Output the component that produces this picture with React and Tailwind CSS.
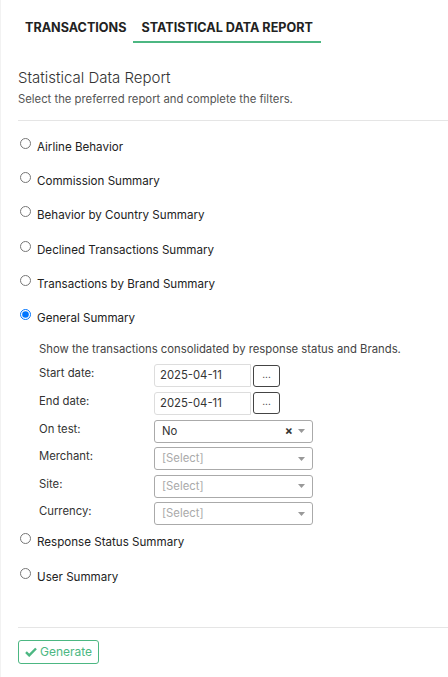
import { useState } from "react"

const reportes = [
  "Airline Behavior",
  "Commission Summary",
  "Behavior by Country Summary",
  "Declined Transactions Summary",
  "Transactions by Brand Summary",
  "General Summary",
  "Response Status Summary",
  "User Summary",
]

const Flecha = () => (
  <svg width="7" height="4" viewBox="0 0 7 4" className="ml-1">
    <path d="M0 0h7L3.5 4z" fill="#999" />
  </svg>
)

const Selector = ({ valor, limpiable }) => (
  <div className="w-[159px] h-[23px] border border-[#aaa] rounded-[3px] flex items-center px-[7px] bg-white">
    <span className={valor ? "flex-1 text-[#333]" : "flex-1 text-[#aaa]"}>
      {valor || "[Select]"}
    </span>
    {limpiable && <span className="text-[12px] font-bold text-[#333] leading-none mr-[1px]">×</span>}
    <Flecha />
  </div>
)

const CampoFecha = ({ valor }) => (
  <div className="flex items-center gap-[2px]">
    <div className="w-[97px] h-[23px] border border-[#ddd] rounded-l-[3px] flex items-center px-[5px] text-[#333]">
      {valor}
    </div>
    <button className="w-[27px] h-[22px] border border-[#444] rounded-[3px] text-[10px] leading-none text-[#333] pb-[4px]">
      ...
    </button>
  </div>
)

const Fila = ({ label, children }) => (
  <div className="flex items-start">
    <span className="w-[115px] text-[#333] pt-[1px]">{label}</span>
    {children}
  </div>
)

export default function App() {
  const [seleccion, setSeleccion] = useState("General Summary")

  return (
    <div className="min-h-[677px] w-[448px] bg-white border-l border-[#f2f2f2] font-['Inter',sans-serif] text-[11.3px] text-[#333]">
      {/* Pestañas */}
      <div className="flex pt-[19px] pl-[15px]">
        <div className="px-[9px] h-[22px] text-[12.6px] font-bold text-[#222]">TRANSACTIONS</div>
        <div className="flex flex-col ml-[-2px]">
          <div className="px-[8px] h-[22px] text-[12.6px] font-bold text-[#222]">STATISTICAL DATA REPORT</div>
          <div className="h-[1.5px] bg-[#4cb782]" />
        </div>
      </div>

      {/* Encabezado */}
      <div className="pl-[17px] pt-[25px]">
        <h2 className="text-[15px] font-light text-[#333] leading-[20px]">Statistical Data Report</h2>
        <p className="text-[11.3px] text-[#555] mt-[4px] leading-[14px]">Select the preferred report and complete the filters.</p>
        <div className="border-t border-[#e5e5e5] mt-[14px]" />
      </div>

      {/* Opciones */}
      <div className="pl-[19px] pt-[16px]">
        {reportes.map((r) => (
          <div key={r}>
            <label className="flex items-start h-[34.4px] cursor-pointer">
              <input
                type="radio"
                name="reporte"
                checked={seleccion === r}
                onChange={() => setSeleccion(r)}
                className="w-[11px] h-[11px] m-0 mt-[1px] accent-[#0075ff]"
              />
              <span className="ml-[6px] mt-[3px] text-[11.6px] text-[#222] leading-[14px]">{r}</span>
            </label>
            {r === "General Summary" && seleccion === r && (
              <div className="pl-[19px] mt-[-2px] mb-[7px] flex flex-col gap-[4.6px]">
                <p className="text-[#444] mb-[2px]">Show the transactions consolidated by response status and Brands.</p>
                <Fila label="Start date:"><CampoFecha valor="2025-04-11" /></Fila>
                <Fila label="End date:"><CampoFecha valor="2025-04-11" /></Fila>
                <Fila label="On test:"><Selector valor="No" limpiable /></Fila>
                <Fila label="Merchant:"><Selector /></Fila>
                <Fila label="Site:"><Selector /></Fila>
                <Fila label="Currency:"><Selector /></Fila>
              </div>
            )}
          </div>
        ))}
      </div>

      {/* Acciones */}
      <div className="pl-[17px] mt-[26px]">
        <div className="border-t border-[#e5e5e5]" />
        <button className="mt-[12px] h-[24px] px-[6px] border border-[#4cb782] rounded-[3px] text-[#4cb782] text-[12px] flex items-center gap-[3px]">
          <svg width="12" height="10" viewBox="0 0 12 10">
            <path d="M1 5.2l3.2 3.2L11 1.5" fill="none" stroke="#4cb782" strokeWidth="2.4" />
          </svg>
          Generate
        </button>
      </div>
    </div>
  )
}
